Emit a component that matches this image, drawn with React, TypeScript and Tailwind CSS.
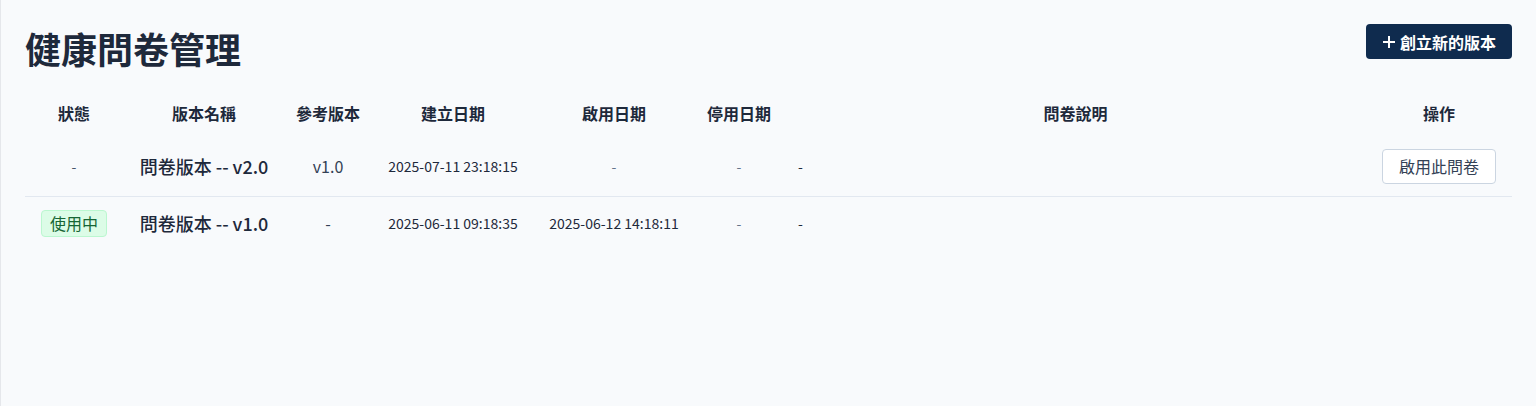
import React from 'react';

type Version = {
  status: 'active' | null;
  name: string;
  ref: string;
  created: string;
  enabled: string;
  disabled: string;
  desc: string;
};

const versions: Version[] = [
  { status: null, name: '問卷版本 -- v2.0', ref: 'v1.0', created: '2025-07-11 23:18:15', enabled: '-', disabled: '-', desc: '-' },
  { status: 'active', name: '問卷版本 -- v1.0', ref: '-', created: '2025-06-11 09:18:35', enabled: '2025-06-12 14:18:11', disabled: '-', desc: '-' },
];

const font = { fontFamily: '"Noto Sans CJK TC", "Noto Sans", sans-serif' };

export default function App() {
  return (
    <div style={font} className="min-h-[406px] bg-[#f8fafc] border-l border-[#e5e7eb] px-6 pt-6 text-[#1e293b]">
      <div className="flex items-start justify-between">
        <h1 className="text-[36px] font-bold leading-[48px] text-[#1e293b]">健康問卷管理</h1>
        <button className="flex h-[35px] items-center gap-1 rounded bg-[#0f2b4e] px-4 text-[16px] font-bold text-white">
          <svg className="h-[14px] w-[14px]" viewBox="0 0 14 14" fill="none" stroke="currentColor" strokeWidth="2">
            <path d="M7 1v12M1 7h12" />
          </svg>
          創立新的版本
        </button>
      </div>

      <table className="mt-[17px] w-full table-fixed border-collapse">
        <colgroup>
          <col className="w-[98px]" />
          <col className="w-[162px]" />
          <col className="w-[86px]" />
          <col className="w-[164px]" />
          <col className="w-[158px]" />
          <col className="w-[92px]" />
          <col />
          <col className="w-[146px]" />
        </colgroup>
        <thead>
          <tr className="h-[48px] text-[16px] font-bold text-[#1e293b]">
            <th className="text-center">狀態</th>
            <th className="text-center">版本名稱</th>
            <th className="text-center">參考版本</th>
            <th className="text-center">建立日期</th>
            <th className="text-center">啟用日期</th>
            <th className="text-center">停用日期</th>
            <th className="text-center">問卷說明</th>
            <th className="text-center">操作</th>
          </tr>
        </thead>
        <tbody>
          {versions.map((v, i) => (
            <tr key={i} className={i === 0 ? 'h-[59px] border-b border-[#e2e8f0]' : 'h-[54px]'}>
              <td className="text-center text-[14px] text-[#475569]">
                {v.status === 'active' ? (
                  <span className="inline-block rounded border border-[#bbf7d0] bg-[#dcfce7] px-2 py-px text-[16px] leading-[23px] text-[#166534]">
                    使用中
                  </span>
                ) : (
                  '-'
                )}
              </td>
              <td className="text-center text-[18px] font-medium text-[#1e293b]">{v.name}</td>
              <td className="text-center text-[16px] text-[#334155]">{v.ref}</td>
              <td className="text-center text-[14px] text-[#1e293b]">{v.created}</td>
              <td className="text-center text-[14px] text-[#1e293b]">
                {v.enabled === '-' ? <span className="text-[#64748b]">-</span> : v.enabled}
              </td>
              <td className="text-center text-[14px] text-[#64748b]">{v.disabled}</td>
              <td className="pl-[13px] text-left text-[14px] text-[#1e293b]">{v.desc}</td>
              <td className="text-center">
                {i === 0 && (
                  <button className="h-[35px] rounded border border-[#cbd5e1] bg-white px-4 text-[16px] text-[#334155]">
                    啟用此問卷
                  </button>
                )}
              </td>
            </tr>
          ))}
        </tbody>
      </table>
    </div>
  );
}
